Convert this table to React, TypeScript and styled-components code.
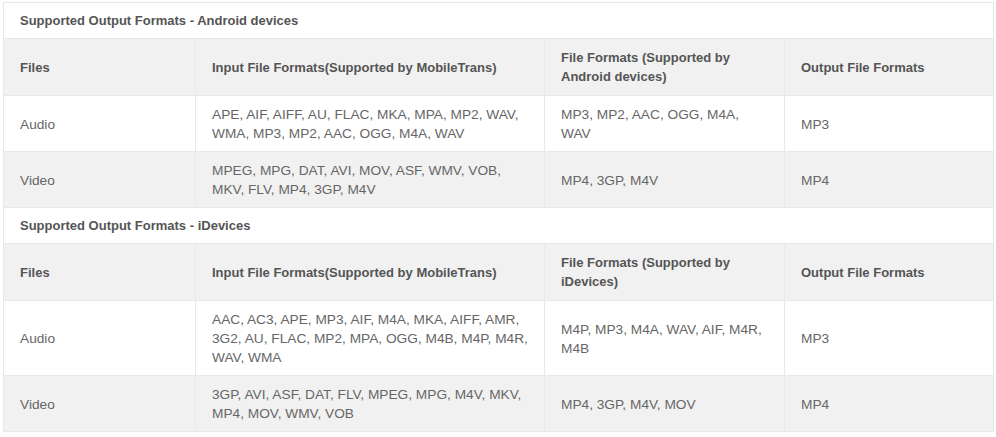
import styled, { createGlobalStyle } from 'styled-components'

const GlobalStyle = createGlobalStyle`
  body {
    margin: 0;
    background: #fff;
    font-family: Arial, "Liberation Sans", sans-serif;
  }
`

type FormatRow = {
  kind: string
  input: string
  device: string
  output: string
}

type Section = {
  title: string
  deviceHeader: string
  rows: FormatRow[]
}

const sections: Section[] = [
  {
    title: 'Supported Output Formats - Android devices',
    deviceHeader: 'File Formats (Supported by Android devices)',
    rows: [
      {
        kind: 'Audio',
        input: 'APE, AIF, AIFF, AU, FLAC, MKA, MPA, MP2, WAV, WMA, MP3, MP2, AAC, OGG, M4A, WAV',
        device: 'MP3, MP2, AAC, OGG, M4A, WAV',
        output: 'MP3',
      },
      {
        kind: 'Video',
        input: 'MPEG, MPG, DAT, AVI, MOV, ASF, WMV, VOB, MKV, FLV, MP4, 3GP, M4V',
        device: 'MP4, 3GP, M4V',
        output: 'MP4',
      },
    ],
  },
  {
    title: 'Supported Output Formats - iDevices',
    deviceHeader: 'File Formats (Supported by iDevices)',
    rows: [
      {
        kind: 'Audio',
        input:
          'AAC, AC3, APE, MP3, AIF, M4A, MKA, AIFF, AMR, 3G2, AU, FLAC, MP2, MPA, OGG, M4B, M4P, M4R, WAV, WMA',
        device: 'M4P, MP3, M4A, WAV, AIF, M4R, M4B',
        output: 'MP3',
      },
      {
        kind: 'Video',
        input: '3GP, AVI, ASF, DAT, FLV, MPEG, MPG, M4V, MKV, MP4, MOV, WMV, VOB',
        device: 'MP4, 3GP, M4V, MOV',
        output: 'MP4',
      },
    ],
  },
]

const Page = styled.div`
  padding: 2px 0 0 3px;
`

const Table = styled.table`
  width: 990px;
  border-collapse: collapse;
  table-layout: fixed;
  font-size: 13.7px;
  line-height: 19px;
  color: #666;
`

const Col = styled.col<{ $w: number }>`
  width: ${(p) => p.$w}px;
`

const TitleCell = styled.td`
  background: #fff;
  border: 1px solid #e8e8e8;
  padding: 8px 16px;
  font-size: 13px;
  font-weight: bold;
  color: #555;
`

const Row = styled.tr<{ $shaded?: boolean }>`
  background: ${(p) => (p.$shaded ? '#f1f1f1' : '#fff')};
`

const Cell = styled.td`
  border: 1px solid #e8e8e8;
  padding: 9px 12px 8px 16px;
  vertical-align: middle;
`

const HeadCell = styled(Cell)`
  font-size: 13px;
  font-weight: bold;
  color: #555;
  padding-bottom: 9px;
`

export default function App() {
  return (
    <Page>
      <GlobalStyle />
      <Table>
        <colgroup>
          <Col $w={192} />
          <Col $w={349} />
          <Col $w={240} />
          <Col $w={209} />
        </colgroup>
        <tbody>
          {sections.map((s) => [
            <tr key={s.title}>
              <TitleCell colSpan={4}>{s.title}</TitleCell>
            </tr>,
            <Row $shaded key={s.title + '-head'}>
              <HeadCell>Files</HeadCell>
              <HeadCell>Input File Formats(Supported by MobileTrans)</HeadCell>
              <HeadCell>{s.deviceHeader}</HeadCell>
              <HeadCell>Output File Formats</HeadCell>
            </Row>,
            ...s.rows.map((r, i) => (
              <Row $shaded={i % 2 === 1} key={s.title + r.kind}>
                <Cell>{r.kind}</Cell>
                <Cell>{r.input}</Cell>
                <Cell>{r.device}</Cell>
                <Cell>{r.output}</Cell>
              </Row>
            )),
          ])}
        </tbody>
      </Table>
    </Page>
  )
}
